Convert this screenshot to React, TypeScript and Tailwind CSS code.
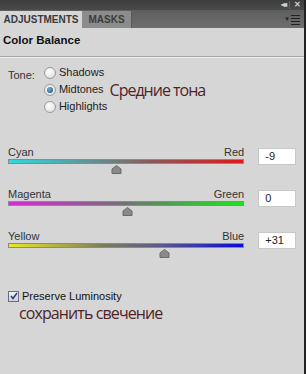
import React from 'react';

interface SliderI {
  left: string;
  right: string;
  gradient: string;
  pos: number; // 0..1
  value: string;
}

const sliders: SliderI[] = [
  { left: 'Cyan', right: 'Red', gradient: 'bg-[linear-gradient(to_right,#2fd8e0,#6f7f80_45%,#8a5a5a_60%,#e01a1a)]', pos: 0.455, value: '-9' },
  { left: 'Magenta', right: 'Green', gradient: 'bg-[linear-gradient(to_right,#d82ad8,#7c6a7c_45%,#5f8a5f_60%,#1ee61e)]', pos: 0.5, value: '0' },
  { left: 'Yellow', right: 'Blue', gradient: 'bg-[linear-gradient(to_right,#e8e82a,#7d7d5c_40%,#5a5a8a_65%,#0a0adc)]', pos: 0.655, value: '+31' },
];

const Radio = ({ checked }: { checked?: boolean }) => (
  <span className="w-[12px] h-[12px] rounded-full border border-[#9a9a9a] bg-[radial-gradient(circle_at_40%_35%,#ffffff,#d8d8d8)] flex items-center justify-center shrink-0">
    {checked && <span className="w-[6px] h-[6px] rounded-full bg-[radial-gradient(circle_at_40%_35%,#6fb0d8,#134a6e)]" />}
  </span>
);

const Thumb = () => (
  <svg width="11" height="9" viewBox="0 0 11 9">
    <path d="M5.5 0.5 L10 4 L10 8.5 L1 8.5 L1 4 Z" fill="#8a8a8a" stroke="#6a6a6a" strokeWidth="1" />
  </svg>
);

const App: React.FC = () => {
  return (
    <div className="w-[306px] h-[374px] flex flex-col bg-[#d6d6d6] font-['Liberation_Sans',Arial,sans-serif] text-[11px] text-[#222] overflow-hidden border-r-2 border-[#222]">
      {/* top bar */}
      <div className="h-[10px] bg-[linear-gradient(#3c3c3c,#4a4a4a)] flex items-center justify-end pr-[3px] gap-[4px] text-[#d0d0d0] text-[8px] font-bold leading-none">
        <span className="tracking-[-2px]">◂◂</span>
        <span className="w-px h-[8px] bg-[#666]" />
        <span>✕</span>
      </div>
      {/* tabs */}
      <div className="h-[18px] bg-[linear-gradient(#5e5e5e,#6e6e6e)] flex items-end">
        <div className="h-[17px] w-[82px] bg-[#d6d6d6] flex items-center justify-center font-bold text-[10px] text-[#3a3a3a]">ADJUSTMENTS</div>
        <div className="h-[17px] w-[50px] bg-[#8c8c8c] border-r border-[#5a5a5a] flex items-center justify-center font-bold text-[10px] text-[#3c3c3c]">MASKS</div>
        <div className="flex-1" />
        <div className="h-[17px] flex items-center pr-[4px] gap-[1px]">
          <span className="text-[6px] text-[#222]">▼</span>
          <span className="flex flex-col gap-[2px]">
            <span className="w-[9px] h-px bg-[#222]" />
            <span className="w-[9px] h-px bg-[#222]" />
            <span className="w-[9px] h-px bg-[#222]" />
            <span className="w-[9px] h-px bg-[#222]" />
          </span>
        </div>
      </div>
      {/* title */}
      <div className="h-[29px] flex items-center pl-[3px] pb-[2px] font-bold text-[11.5px] text-[#111] border-b border-[#a8a8a8] shadow-[0_1px_0_#eeeeee]">
        Color Balance
      </div>
      {/* tone */}
      <div className="flex pl-[8px] pt-[9px] gap-[9px]">
        <span className="pt-[1px] text-[#333]">Tone:</span>
        <div className="flex flex-col gap-[4px]">
          <label className="flex items-center gap-[3px] h-[13px]"><Radio /><span>Shadows</span></label>
          <label className="flex items-center gap-[3px] h-[13px]">
            <Radio checked />
            <span>Midtones</span>
            <span className="ml-[3px] font-['Open_Sans',sans-serif] text-[16px] leading-none tracking-[-1px] text-[#4f2427]">Средние тона</span>
          </label>
          <label className="flex items-center gap-[3px] h-[13px]"><Radio /><span>Highlights</span></label>
        </div>
      </div>
      {/* sliders */}
      <div className="flex flex-col pl-[8px] pr-[8px] mt-[33px] gap-[14px]">
        {sliders.map((s) => (
          <div key={s.left} className="flex items-start gap-[14px]">
            <div className="w-[238px] flex flex-col">
              <div className="flex justify-between h-[13px] leading-[13px] text-[#333]">
                <span>{s.left}</span>
                <span>{s.right}</span>
              </div>
              <div className={`mt-[0px] h-[5px] border border-[#8a8a8a] ${s.gradient}`} />
              <div className="relative h-[10px]">
                <div className="absolute top-[1px]" style={{ left: `${s.pos * 238 - 5}px` }}>
                  <Thumb />
                </div>
              </div>
            </div>
            <div className="mt-[2px] w-[38px] h-[17px] bg-white border border-[#c8c8c8] flex items-center pl-[6px] text-[11px] text-[#222]">{s.value}</div>
          </div>
        ))}
      </div>
      {/* preserve */}
      <div className="pl-[8px] mt-[30px] flex items-center gap-[3px]">
        <span className="w-[11px] h-[11px] border border-[#6a6a8a] bg-[linear-gradient(#f0f0f0,#d0d0d0)] flex items-center justify-center">
          <svg width="8" height="8" viewBox="0 0 8 8"><path d="M1 4 L3 6.5 L7 1" fill="none" stroke="#2a3a7a" strokeWidth="1.5" /></svg>
        </span>
        <span className="text-[#111]">Preserve Luminosity</span>
      </div>
      <div className="pl-[19px] font-['Open_Sans',sans-serif] text-[16px] leading-[17px] tracking-[-0.9px] text-[#4f2427]">сохранить свечение</div>
    </div>
  );
};

export default App;
